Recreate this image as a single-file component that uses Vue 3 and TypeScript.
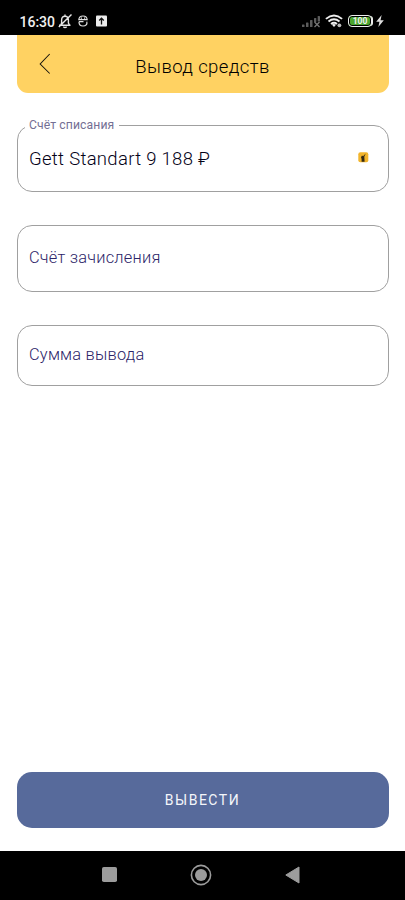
<script setup lang="ts">
import { ref } from 'vue'

interface Field {
  id: string
  label: string
  value?: string
}

const time = ref('16:30')
const battery = ref(100)
const fields: Field[] = [
  { id: 'from', label: 'Счёт списания', value: 'Gett Standart 9 188 ₽' },
  { id: 'to', label: 'Счёт зачисления' },
  { id: 'amount', label: 'Сумма вывода' },
]
</script>

<template>
  <div class="screen">
    <div class="status">
      <span class="time">{{ time }}</span>
      <svg class="bell" width="14" height="16" viewBox="0 0 14 16" fill="none" stroke="#e4e4e4" stroke-width="1.4">
        <path d="M1 12.200H12.500M2.800 12L3.600 10V7.200C3.600 4.800 4.900 3.200 7 3.200S10.400 4.800 10.400 7.200V10L11.500 12M7 3V1.500M5.300 13.700Q7 15.200 8.700 13.700M13.500 1.500L.8 14" />
      </svg>
      <svg class="face" width="10" height="12" viewBox="0 0 10 12" fill="none" stroke="#e0e0e0" stroke-width="1.200">
        <path d="M.8 4.700C1 2.200 2.400 1 5 1S9 2.200 9.200 4.700ZM2.800 3.200H4M6 3.200H7.200M.8 6.600H5.500M8.800 6.600C9.500 9.200 7.800 11 5 11S1 9.500 1 7" />
      </svg>
      <svg class="upload" width="11" height="12" viewBox="0 0 11 12">
        <rect y=".5" width="11" height="11" rx="1" fill="#ececec" />
        <path d="M5.500 9.500V3.300M3.200 5.500L5.500 3.200L7.800 5.500" fill="none" stroke="#111" stroke-width="1.300" />
      </svg>
      <svg class="signal" width="19" height="13" viewBox="0 0 19 13" fill="#5c5c5c">
        <rect x="0" y="9.500" width="2.500" height="2.500" rx=".6" />
        <rect x="4" y="7.500" width="2.500" height="4.500" rx=".6" />
        <rect x="8" y="5" width="2.500" height="7" rx=".6" />
        <rect x="12" y="3" width="2.300" height="4" rx=".6" />
        <rect x="15.700" y="1" width="2.300" height="5.500" rx=".6" />
        <path d="M12.500 7L17.500 12M17.500 7L12.500 12" stroke="#777" stroke-width="1.300" />
      </svg>
      <svg class="wifi" width="18" height="14" viewBox="0 0 18 14" fill="none" stroke="#eee" stroke-width="1.900">
        <path d="M.9 4.900Q9-2 17.100 4.900M3.500 7.500Q9 3 14.500 7.500M6 10Q9 7.700 12 10" />
        <path d="M6.700 10.600L9 13L11 10.800Q9 9.300 6.700 10.600Z" fill="#eee" stroke="none" />
        <circle cx="14.400" cy="11.300" r="1.900" fill="#bbb" stroke="none" />
      </svg>
      <span class="battery">{{ battery }}</span>
      <svg class="bolt" width="8" height="12" viewBox="0 0 7 11"><path d="M5 0L0 6.200H3L2 11L7 4.700H4Z" fill="#ddd" /></svg>
    </div>

    <header class="header">
      <svg class="back" width="12" height="22" viewBox="0 0 12 22" fill="none" stroke="#17140c" stroke-width="1.050">
        <path d="M10.700 1L1.200 11L10.700 20.500" />
      </svg>
      <h1>Вывод средств</h1>
    </header>

    <main class="form">
      <div v-for="f in fields" :key="f.id" :class="['field', f.id]">
        <template v-if="f.value">
          <span class="legend">{{ f.label }}</span>
          <span class="value">{{ f.value }}</span>
          <svg class="brand" width="11" height="11" viewBox="0 0 11 11">
            <rect x=".3" y=".3" width="10" height="10" rx="2" fill="#f2b52d" />
            <path d="M3.600 9.800V7L3 5.200L4 3.500L5.100 4.300L7.700 1.500L6.300 4.800L6.600 9.800Z" fill="#332a16" />
          </svg>
        </template>
        <span v-else class="placeholder">{{ f.label }}</span>
      </div>
    </main>

    <button class="submit" type="button">ВЫВЕСТИ</button>

    <nav class="nav">
      <svg width="15" height="15" viewBox="0 0 15 15"><rect width="15" height="15" rx="1.800" fill="#9c9c9c" /></svg>
      <svg width="22" height="22" viewBox="0 0 22 22">
        <circle cx="11" cy="11" r="9.600" fill="none" stroke="#9c9c9c" stroke-width="1.600" />
        <circle cx="11" cy="11" r="6" fill="#9c9c9c" />
      </svg>
      <svg width="15" height="18" viewBox="0 0 15 18"><path d="M.8 9L14 1V17Z" fill="#9c9c9c" stroke="#9c9c9c" stroke-linejoin="round" /></svg>
    </nav>
  </div>
</template>

<style>
body {
  background: #fff;
}
</style>

<style scoped>
.screen {
  width: 405px;
  height: 900px;
  box-sizing: border-box;
  display: flex;
  flex-direction: column;
  font-family: Roboto, "Noto Sans", sans-serif;
  background: #fff;
  overflow: hidden;
}
svg {
  display: block;
  flex: none;
}
.status {
  height: 34.500px;
  flex: none;
  box-sizing: border-box;
  padding: 8px 21px 0 19.500px;
  display: flex;
  align-items: center;
  background: #000;
  color: #f0f0f0;
}
.time {
  width: 38.500px;
  padding-top: 2px;
  font-size: 14px;
  font-weight: 500;
  line-height: 18px;
  white-space: nowrap;
}
.face {
  margin-left: 6px;
}
.upload {
  margin-left: 8px;
}
.signal {
  margin-left: auto;
}
.wifi {
  margin-left: 4px;
}
.battery {
  width: 24px;
  height: 12px;
  box-sizing: border-box;
  margin-left: 5px;
  border: 1.500px solid #eee;
  border-radius: 4px;
  background: #4ba52e;
  box-shadow: inset 0 0 0 1px #000, 2px 0 0 -1px #eee;
  font-size: 8.500px;
  font-weight: 700;
  line-height: 10px;
  text-align: center;
}
.bolt {
  margin-left: 4px;
}
.header {
  height: 58px;
  flex: none;
  box-sizing: border-box;
  margin: 0 16.500px;
  padding: 0 22px;
  display: grid;
  grid-template-columns: 12px 1fr 12px;
  align-items: center;
  border-radius: 0 0 11px 11px;
  background: #ffd262;
}
h1 {
  margin: 6px 0 0;
  font-size: 18.500px;
  font-weight: 300;
  line-height: 24px;
  letter-spacing: 0.400px;
  text-align: center;
  color: #000;
}
.form {
  display: flex;
  flex-direction: column;
  gap: 33px;
  margin: 32px 16.500px 0;
}
.field {
  position: relative;
  display: flex;
  align-items: center;
  box-sizing: border-box;
  height: 67px;
  padding: 0 19px 0 11.500px;
  border: 1px solid #a0a0a0;
  border-radius: 15px;
}
.field.amount {
  height: 61px;
}
.legend {
  position: absolute;
  top: -9px;
  left: 7.500px;
  padding: 0 4.500px 0 4px;
  background: #fff;
  font-size: 12.200px;
  font-weight: 400;
  line-height: 16px;
  letter-spacing: 0.100px;
  color: #746f94;
}
.value {
  margin-top: 2px;
  font-size: 18.500px;
  font-weight: 300;
  letter-spacing: 0.300px;
  color: #050218;
}
.brand {
  margin: 0 0 2px auto;
}
.placeholder {
  margin-bottom: 1px;
  font-size: 16.400px;
  font-weight: 300;
  letter-spacing: 0.230px;
  color: #2c2468;
}
.submit {
  height: 56px;
  flex: none;
  margin: auto 16.500px 23.500px;
  border: 0;
  border-radius: 15px;
  background: #576a9b;
  font-family: inherit;
  font-size: 14px;
  letter-spacing: 1.500px;
  color: #f4f6fa;
}
.nav {
  height: 49px;
  flex: none;
  box-sizing: border-box;
  padding: 0 105px 2px 102px;
  display: flex;
  align-items: center;
  justify-content: space-between;
  background: #000;
}
</style>
